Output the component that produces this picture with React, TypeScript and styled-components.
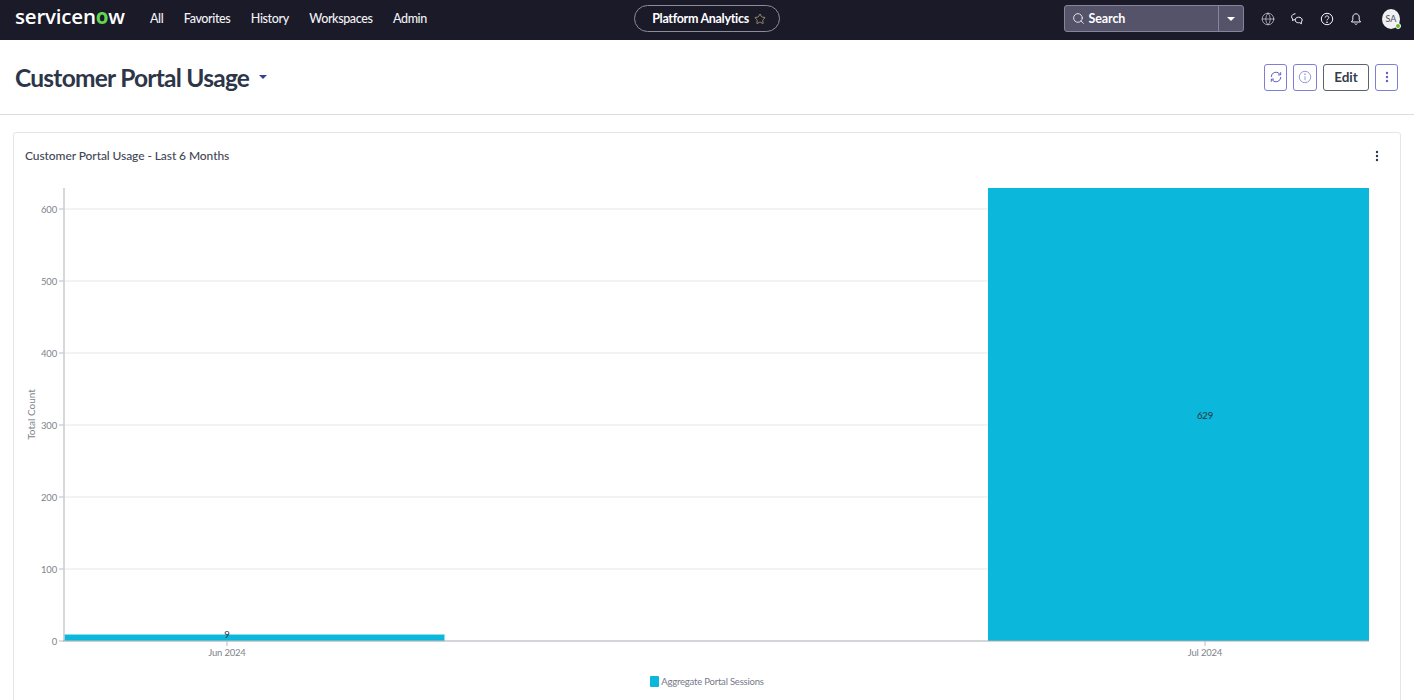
import React from "react";
import styled, { createGlobalStyle } from "styled-components";
import { Globe, Search, Star } from "lucide-react";

const GlobalStyle = createGlobalStyle`
    html, body {
        margin: 0;
        height: 700px;
        overflow: hidden;
        background: #fff;
        font-family: Lato, "Liberation Sans", sans-serif;
    }
    * { box-sizing: border-box; }
`;

const Page = styled.div`
    width: 1414px;
    height: 700px;
    overflow: hidden;
    display: flex;
    flex-direction: column;
`;

const TopBar = styled.header`
    height: 40px;
    flex: none;
    background: #1a1a29;
    display: grid;
    grid-template-columns: 1fr auto 1fr;
    align-items: center;
    padding: 0 10px 3px 10px;
`;

const TopLeft = styled.div`
    display: flex;
    align-items: center;
`;

const Logo = styled.div`
    font-family: "Open Sans", sans-serif;
    font-size: 20.5px;
    font-weight: 600;
    letter-spacing: -0.2px;
    color: #fff;
    width: 135px;
    margin-left: 5px;
    line-height: 1;
    margin-top: -4px;
    b {
        font-weight: 700;
        color: #62d84e;
    }
`;

const Nav = styled.nav`
    display: flex;
    gap: 20.5px;
`;

const NavItem = styled.a`
    font-size: 12.5px;
    font-weight: 500;
    letter-spacing: -0.38px;
    color: #f2f2f5;
`;

const AppPill = styled.div`
    height: 27px;
    width: 146px;
    padding-left: 4px;
    border: 1px solid #8d8d99;
    border-radius: 14px;
    display: flex;
    align-items: center;
    justify-content: center;
    gap: 5px;
    color: #fff;
    font-size: 12.5px;
    font-weight: 700;
    letter-spacing: -0.3px;
    svg {
        color: #d8bf8a;
    }
`;

const TopRight = styled.div`
    display: flex;
    align-items: center;
    justify-content: flex-end;
`;

const SearchBox = styled.div`
    width: 180px;
    height: 27px;
    background: #55536a;
    border: 1px solid #85849a;
    border-radius: 3px;
    display: flex;
    align-items: center;
    color: #fff;
    font-size: 12.5px;
    font-weight: 700;
    letter-spacing: -0.1px;
    margin-right: 17px;
`;

const SearchField = styled.div`
    flex: 1;
    display: flex;
    align-items: center;
    gap: 4px;
    padding-left: 7px;
    height: 100%;
    border-right: 1px solid #85849a;
`;

const SearchCaret = styled.div`
    width: 24px;
    display: flex;
    justify-content: center;
`;

const Caret = styled.span<{ $color: string; $w: number }>`
    width: 0;
    height: 0;
    display: inline-block;
    border-left: ${(p) => p.$w}px solid transparent;
    border-right: ${(p) => p.$w}px solid transparent;
    border-top: ${(p) => p.$w}px solid ${(p) => p.$color};
`;

const IconGroup = styled.div`
    display: flex;
    align-items: center;
    gap: 15.5px;
    color: #f4f4f8;
    margin-right: 19px;
`;

const Avatar = styled.div`
    position: relative;
    width: 18px;
    height: 20px;
    border-radius: 50%;
    background: #f1f1f4;
    color: #55566a;
    font-size: 9px;
    font-weight: 500;
    display: flex;
    align-items: center;
    justify-content: center;
    margin-right: 4px;
`;

const Presence = styled.span`
    position: absolute;
    right: -1px;
    bottom: 0;
    width: 6px;
    height: 6px;
    border-radius: 50%;
    background: #63b82f;
    border: 1px solid #fff;
`;

const PageHeader = styled.div`
    height: 75px;
    flex: none;
    display: flex;
    align-items: center;
    justify-content: space-between;
    padding: 0 16px 0 15px;
    border-bottom: 1px solid #dcdde1;
`;

const TitleGroup = styled.div`
    display: flex;
    align-items: center;
    gap: 10px;
`;

const Title = styled.h1`
    margin: 0;
    font-size: 24.5px;
    font-weight: 700;
    color: #2d3648;
    letter-spacing: -0.75px;
`;

const Actions = styled.div`
    display: flex;
    align-items: center;
    gap: 6px;
`;

const IconButton = styled.button`
    width: 23px;
    height: 27px;
    padding: 0;
    background: #fff;
    border: 1px solid #7d7fd6;
    border-radius: 3px;
    color: #5f62c4;
    display: flex;
    align-items: center;
    justify-content: center;
`;

const InfoButton = styled(IconButton)`
    width: 24px;
    color: #9a9cdc;
`;

const EditButton = styled.button`
    width: 46px;
    height: 27px;
    padding: 0;
    background: #fff;
    border: 1px solid #5b6270;
    border-radius: 3px;
    color: #353d4d;
    font-family: inherit;
    font-size: 13.5px;
    font-weight: 700;
`;

const Card = styled.section`
    margin: 17px 13px 0 13px;
    height: 620px;
    flex: none;
    border: 1px solid #e4e5e8;
    border-radius: 3px;
    display: flex;
    flex-direction: column;
`;

const CardHead = styled.div`
    display: flex;
    align-items: center;
    justify-content: space-between;
    padding: 13px 16px 0 11px;
    height: 32px;
    flex: none;
`;

const CardTitle = styled.h2`
    margin: 0;
    font-size: 12px;
    font-weight: 500;
    letter-spacing: -0.08px;
    color: #3f4756;
`;

const Chart = styled.svg`
    display: block;
    width: 1386px;
    height: 490px;
    flex: none;
    margin-top: 15px;
    text {
        font-family: Lato, "Liberation Sans", sans-serif;
        font-size: 9.5px;
        letter-spacing: -0.2px;
        fill: #80838c;
    }
    .value {
        fill: #2b2f38;
    }
    .axis-title {
        font-size: 10px;
        letter-spacing: 0;
    }
`;

const Legend = styled.div`
    display: flex;
    align-items: center;
    justify-content: center;
    gap: 2px;
    margin-top: 6px;
    font-size: 9.5px;
    letter-spacing: -0.2px;
    color: #757a89;
`;

const Swatch = styled.span`
    width: 9px;
    height: 11px;
    border-radius: 1px;
    background: #0bb8dc;
`;

function Dots({ color, size = 14 }: { color: string; size?: number }) {
    return (
        <svg width={size} height={size} viewBox="0 0 14 14" fill={color}>
            <circle cx="7" cy="3" r="1.2" />
            <circle cx="7" cy="7" r="1.2" />
            <circle cx="7" cy="11" r="1.2" />
        </svg>
    );
}

function ChatIcon() {
    return (
        <svg width="14" height="14" viewBox="0 0 14 14" fill="none" stroke="currentColor" strokeWidth="1">
            <path d="M5.5 1.8c-2.2 0-3.9 1.3-3.9 3 0 .9.5 1.7 1.2 2.2l-.3 1.6 1.8-1c.3 0 .6.1.9.1" />
            <path d="M8.6 5.2c2 0 3.6 1.2 3.6 2.8 0 .8-.4 1.5-1 2l.3 1.8-1.9-1.1c-.3.1-.7.1-1 .1-2 0-3.5-1.2-3.5-2.8s1.5-2.8 3.5-2.8z" />
        </svg>
    );
}

function HelpIcon() {
    return (
        <svg width="14" height="14" viewBox="0 0 14 14" fill="none" stroke="currentColor" strokeWidth="1">
            <circle cx="7" cy="7" r="5.7" />
            <path d="M5.2 5.6c0-1 .8-1.7 1.8-1.7s1.8.7 1.8 1.6c0 1.4-1.8 1.4-1.8 2.9" />
            <circle cx="7" cy="10.2" r=".4" fill="currentColor" />
        </svg>
    );
}

function BellIcon() {
    return (
        <svg width="14" height="14" viewBox="0 0 14 14" fill="none" stroke="currentColor" strokeWidth="1">
            <path d="M7 1.8c-2 0-3.2 1.5-3.2 3.4v2.5L2.5 10h9l-1.3-2.3V5.2C10.2 3.3 9 1.8 7 1.8z" />
            <path d="M5.8 11.5c.3.6.7.9 1.2.9s.9-.3 1.2-.9" />
        </svg>
    );
}

function RefreshIcon() {
    return (
        <svg width="14" height="14" viewBox="0 0 14 14" fill="none" stroke="currentColor" strokeWidth="1">
            <path d="M2.2 7a4.8 4.8 0 0 1 8.2-3.4l1.2 1.2" />
            <path d="M11.8 7a4.8 4.8 0 0 1-8.2 3.4L2.4 9.2" />
            <path d="M11.7 2.2v2.7H9" />
            <path d="M2.3 11.8V9.1H5" />
        </svg>
    );
}

function InfoIcon() {
    return (
        <svg width="14" height="14" viewBox="0 0 14 14" fill="none" stroke="currentColor" strokeWidth="1">
            <circle cx="7" cy="7" r="5.7" />
            <path d="M7 6.2v4" />
            <circle cx="7" cy="4.2" r=".4" fill="currentColor" />
        </svg>
    );
}

// chart coordinates: page x minus 14, page y minus 180
const AXIS_X = 50;
const ZERO_Y = 461;
const TICKS = [0, 100, 200, 300, 400, 500, 600];

function UsageChart() {
    return (
        <Chart viewBox="0 0 1386 490">
            {TICKS.filter((t) => t > 0).map((t) => (
                <line key={t} x1={AXIS_X} x2={1355} y1={ZERO_Y - t * 0.72} y2={ZERO_Y - t * 0.72} stroke="#e6e7ea" />
            ))}
            {TICKS.map((t) => (
                <g key={t}>
                    <line x1={AXIS_X - 5} x2={AXIS_X} y1={ZERO_Y - t * 0.72} y2={ZERO_Y - t * 0.72} stroke="#b9bcc4" />
                    <text x={AXIS_X - 7} y={ZERO_Y - t * 0.72 + 3.5} textAnchor="end">
                        {t}
                    </text>
                </g>
            ))}
            <text className="axis-title" x={0} y={0} textAnchor="middle" transform="translate(20.5 234.5) rotate(-90)">
                Total Count
            </text>
            <rect x={AXIS_X} y={454.5} width={380.5} height={6.5} fill="#0bb8dc" stroke="#8fdff0" strokeWidth="0.6" />
            <rect x={974} y={8} width={381} height={453} fill="#0bb8dc" />
            <line x1={AXIS_X} x2={AXIS_X} y1={8} y2={ZERO_Y} stroke="#c9cbd1" strokeWidth="1.5" />
            <line x1={AXIS_X - 1} x2={1355} y1={ZERO_Y} y2={ZERO_Y} stroke="#a7abb5" />
            <line x1={213} x2={213} y1={ZERO_Y} y2={ZERO_Y + 5} stroke="#b9bcc4" />
            <line x1={1191} x2={1191} y1={ZERO_Y} y2={ZERO_Y + 5} stroke="#b9bcc4" />
            <text className="value" x={213} y={458} textAnchor="middle">9</text>
            <text className="value" x={1191} y={238.5} textAnchor="middle">629</text>
            <text x={213} y={475.5} textAnchor="middle">Jun 2024</text>
            <text x={1191} y={475.5} textAnchor="middle">Jul 2024</text>
        </Chart>
    );
}

export default function App() {
    return (
        <Page>
            <GlobalStyle />
            <TopBar>
                <TopLeft>
                    <Logo>
                        servicen<b>o</b>w
                    </Logo>
                    <Nav>
                        <NavItem>All</NavItem>
                        <NavItem>Favorites</NavItem>
                        <NavItem>History</NavItem>
                        <NavItem>Workspaces</NavItem>
                        <NavItem>Admin</NavItem>
                    </Nav>
                </TopLeft>
                <AppPill>
                    Platform Analytics <Star size={12} strokeWidth={1.3} />
                </AppPill>
                <TopRight>
                    <SearchBox>
                        <SearchField>
                            <Search size={13} strokeWidth={1.5} /> Search
                        </SearchField>
                        <SearchCaret>
                            <Caret $color="#fff" $w={4} />
                        </SearchCaret>
                    </SearchBox>
                    <IconGroup>
                        <Globe size={14} strokeWidth={1} />
                        <ChatIcon />
                        <HelpIcon />
                        <BellIcon />
                    </IconGroup>
                    <Avatar>
                        SA
                        <Presence />
                    </Avatar>
                </TopRight>
            </TopBar>
            <PageHeader>
                <TitleGroup>
                    <Title>Customer Portal Usage</Title>
                    <Caret $color="#3b3f8f" $w={4} />
                </TitleGroup>
                <Actions>
                    <IconButton>
                        <RefreshIcon />
                    </IconButton>
                    <InfoButton>
                        <InfoIcon />
                    </InfoButton>
                    <EditButton>Edit</EditButton>
                    <IconButton>
                        <Dots color="#5f62c4" />
                    </IconButton>
                </Actions>
            </PageHeader>
            <Card>
                <CardHead>
                    <CardTitle>Customer Portal Usage - Last 6 Months</CardTitle>
                    <Dots color="#2d3648" />
                </CardHead>
                <UsageChart />
                <Legend>
                    <Swatch />
                    Aggregate Portal Sessions
                </Legend>
            </Card>
        </Page>
    );
}
